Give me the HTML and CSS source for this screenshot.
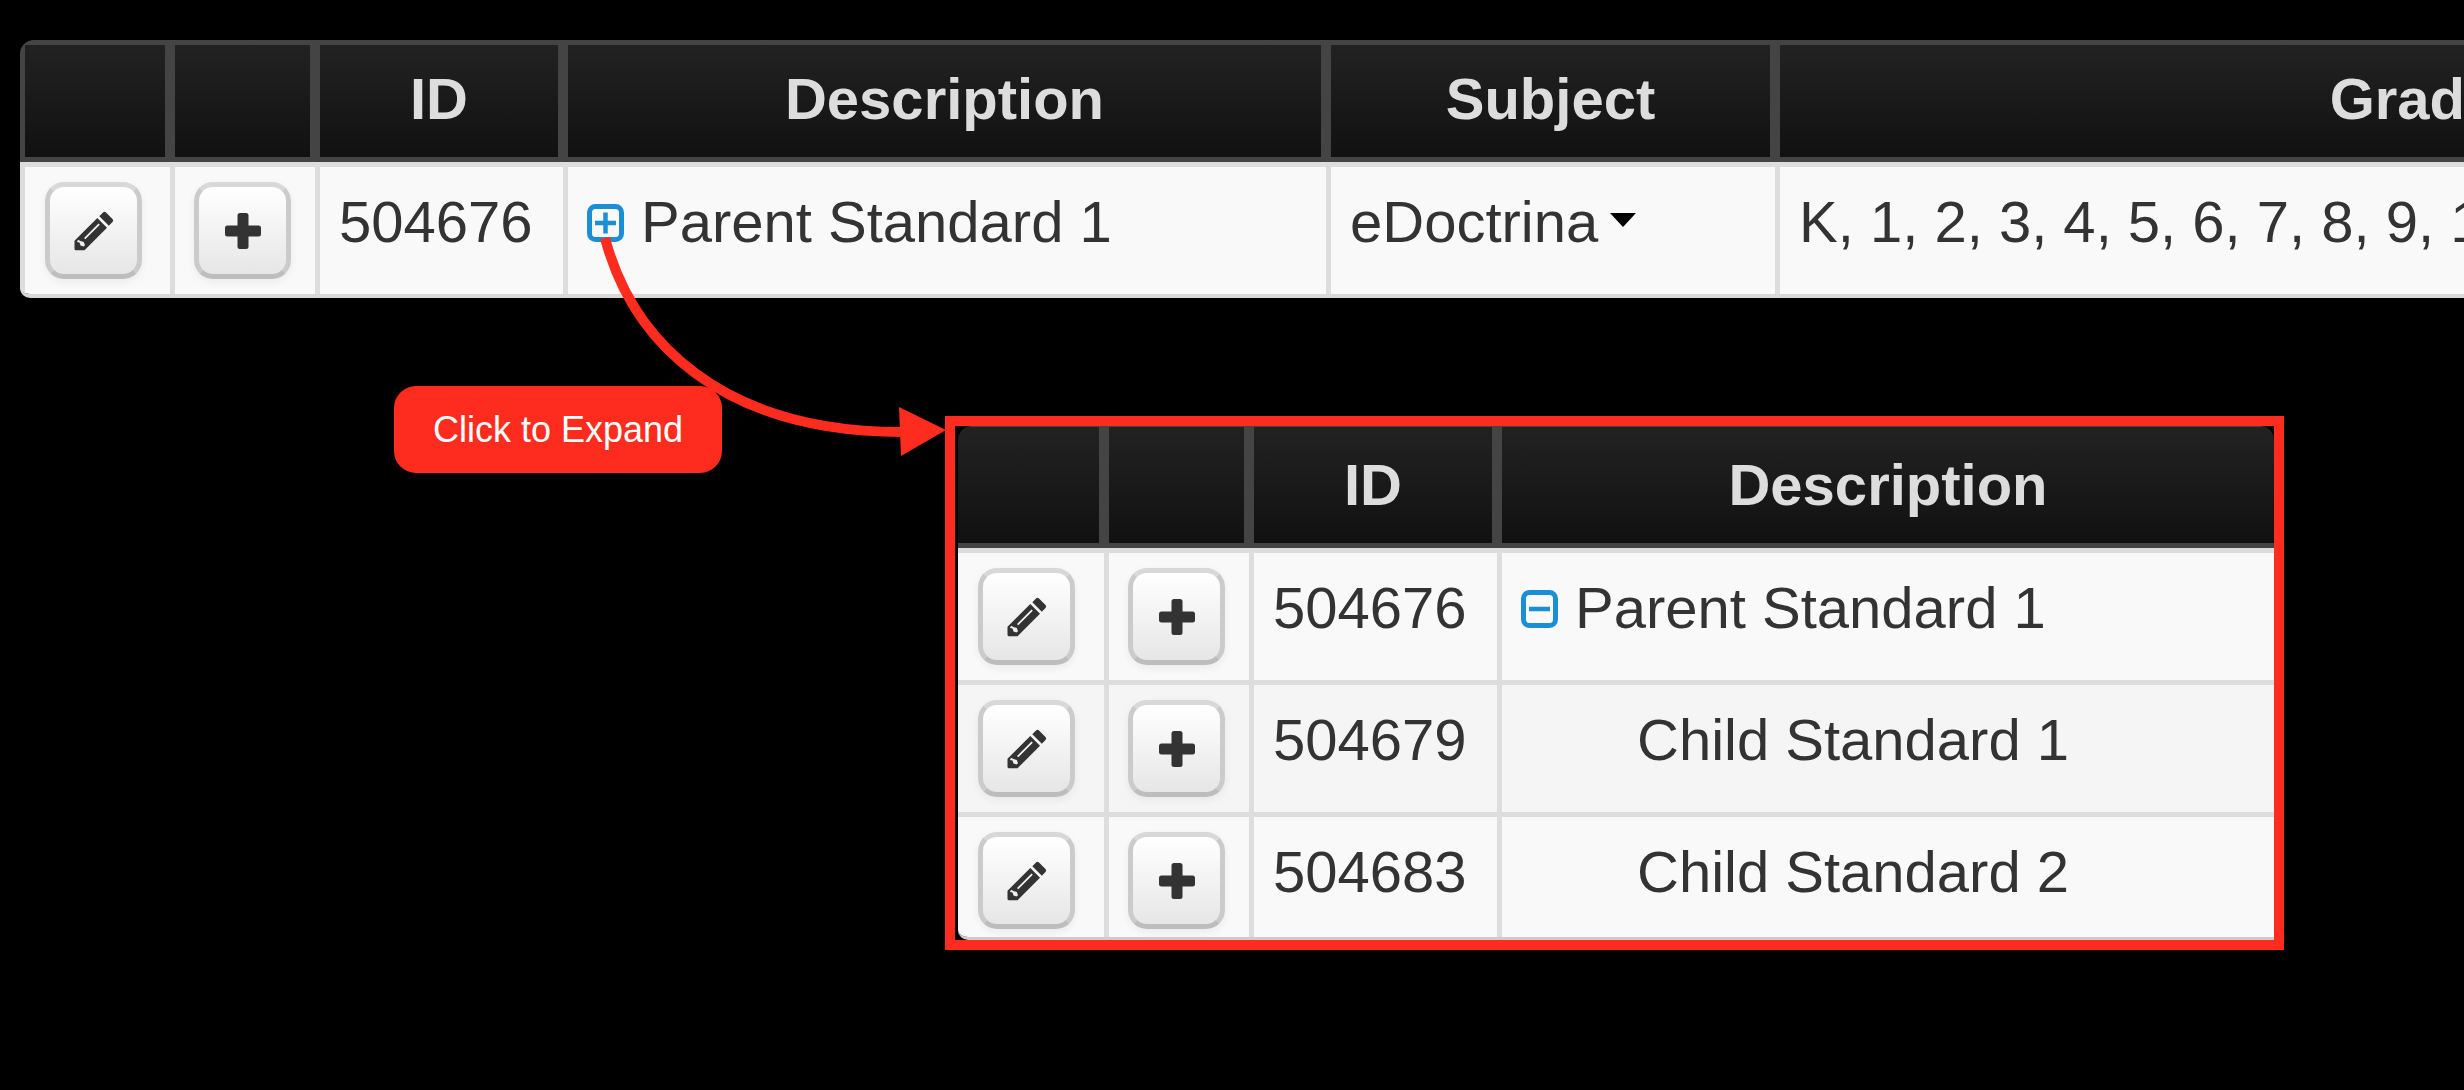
FILE: index.html
```html
<!DOCTYPE html>
<html lang="en">
<head>
    <meta charset="UTF-8">
    <title>Expand Standards</title>
    <link rel="stylesheet" href="styles.css">
</head>
<body>
    <div class="pagina">
        <div class="tabela-wrap principal">
            <table class="tabela">
                <thead>
                    <tr>
                        <th></th>
                        <th></th>
                        <th>ID</th>
                        <th>Description</th>
                        <th>Subject</th>
                        <th>Grade</th>
                    </tr>
                </thead>
                <tbody>
                    <tr>
                        <td><button class="botao"><svg class="ico-lapis" viewBox="0 0 40 40"><use href="#lapis"/></svg></button></td>
                        <td><button class="botao"><svg class="ico-mais" viewBox="0 0 36 36"><use href="#mais"/></svg></button></td>
                        <td>504676</td>
                        <td><svg class="toggle" viewBox="0 0 37 38"><rect x="2.5" y="2.5" width="32" height="33" rx="6"/><path d="M8 19H29M18.5 8.500V29.500"/></svg>Parent Standard 1</td>
                        <td>eDoctrina<span class="caret"></span></td>
                        <td>K, 1, 2, 3, 4, 5, 6, 7, 8, 9, 10, 11, 12</td>
                    </tr>
                </tbody>
            </table>
        </div>

        <div class="moldura">
            <div class="tabela-wrap">
                <table class="tabela expandida">
                    <thead>
                        <tr>
                            <th></th>
                            <th></th>
                            <th>ID</th>
                            <th>Description</th>
                        </tr>
                    </thead>
                    <tbody>
                        <tr>
                            <td><button class="botao"><svg class="ico-lapis" viewBox="0 0 40 40"><use href="#lapis"/></svg></button></td>
                            <td><button class="botao"><svg class="ico-mais" viewBox="0 0 36 36"><use href="#mais"/></svg></button></td>
                            <td>504676</td>
                            <td><svg class="toggle" viewBox="0 0 37 38"><rect x="2.5" y="2.500" width="32" height="33" rx="6"/><path d="M8 19H29"/></svg>Parent Standard 1</td>
                        </tr>
                        <tr class="par">
                            <td><button class="botao"><svg class="ico-lapis" viewBox="0 0 40 40"><use href="#lapis"/></svg></button></td>
                            <td><button class="botao"><svg class="ico-mais" viewBox="0 0 36 36"><use href="#mais"/></svg></button></td>
                            <td>504679</td>
                            <td class="filho">Child Standard 1</td>
                        </tr>
                        <tr>
                            <td><button class="botao"><svg class="ico-lapis" viewBox="0 0 40 40"><use href="#lapis"/></svg></button></td>
                            <td><button class="botao"><svg class="ico-mais" viewBox="0 0 36 36"><use href="#mais"/></svg></button></td>
                            <td>504683</td>
                            <td class="filho">Child Standard 2</td>
                        </tr>
                    </tbody>
                </table>
            </div>
        </div>

        <!-- anotacao por cima da tabela -->
        <svg class="seta" viewBox="0 0 2464 1090">
            <path class="seta-linha" d="M605 238C632 340 720 432 902 432"/>
            <polygon class="seta-ponta" points="899,407 946,430 901,456"/>
        </svg>
        <div class="balao">Click to Expand</div>
    </div>

    <svg class="defs" width="0" height="0">
        <defs>
            <g id="lapis">
                <path d="M29 1.500Q30.500 0 32 1.500L38.500 8Q40 9.500 38.500 11L34.800 14.700L25.300 5.200Z"/>
                <path fill-rule="evenodd" d="M23.300 7L33 16.800L10.500 39.300H2Q.5 39.300 .5 37.800V29.800ZM24.500 12.500L10 27L11.300 28.300L25.800 13.800ZM4 28.800L3 31L5.500 31.600L6.500 34.500L9.500 35.500L11 34.300L9.800 31L6.500 30Z"/>
            </g>
            <g id="mais">
                <rect x="0" y="12.500" width="36" height="11" rx="2.500"/>
                <rect x="12.500" y="0" width="11" height="36" rx="2.500"/>
            </g>
        </defs>
    </svg>
</body>
</html>
```

FILE: styles.css
```css
body {
    margin: 0;
    background: #000;
    font-family: "Liberation Sans", Arial, sans-serif;
}

.pagina {
    position: relative;
    box-sizing: border-box;
    width: 2464px;
    height: 1090px;
    padding: 40px 0 0 20px;
    overflow: hidden;
}

.defs {
    position: absolute;
}

/* tabelas */
.tabela-wrap {
    border-radius: 14px 14px 0 10px;
    overflow: hidden;
}

.principal {
    width: 3032px;
    border-bottom: 4px solid #d8d8d8;
}

.tabela {
    width: 100%;
    table-layout: fixed;
    border-collapse: separate;
    border-spacing: 0;
    font-size: 58px;
    line-height: 80px;
    white-space: nowrap;
}

.tabela th {
    box-sizing: border-box;
    height: 122px;
    padding: 14px 19px 18px;
    border: 5px solid #444;
    background: linear-gradient(to bottom, #222, #111);
    color: #ddd;
    font-weight: bold;
    text-align: center;
}

.tabela td {
    box-sizing: border-box;
    height: 131px;
    padding: 15px 19px;
    border-top: 5px solid #ddd;
    border-left: 5px solid #ddd;
    background: #f9f9f9;
    color: #333;
    vertical-align: top;
    overflow: hidden;
}

.tabela td:first-child {
    padding-left: 20px;
}

.principal th:nth-child(1) { width: 150px; }
.principal th:nth-child(2) { width: 145px; }
.principal th:nth-child(3) { width: 248px; }
.principal th:nth-child(4) { width: 763px; }
.principal th:nth-child(5) { width: 449px; }

/* tabela dentro da moldura vermelha */
.moldura {
    box-sizing: border-box;
    width: 1339px;
    height: 534px;
    margin: 118px 0 0 925px;
    padding-left: 3px;
    border: 10px solid #fe2c1e;
}

.moldura .tabela-wrap {
    height: 514px;
    border-bottom: 3px solid #ccc;
    box-sizing: border-box;
}

.expandida th {
    height: 118px;
    border-top-width: 1px;
    padding-top: 18px;
}

.expandida th:first-child {
    border-left-width: 0;
}

.expandida th:last-child {
    border-right-width: 0;
}

.expandida td:first-child {
    border-left: 0;
}

.expandida th:nth-child(1) { width: 146px; }
.expandida th:nth-child(2) { width: 145px; }
.expandida th:nth-child(3) { width: 248px; }

.expandida .par td {
    background: #f5f5f5;
}

.expandida .filho {
    padding-left: 135px;
}

/* botoes */
.botao {
    display: flex;
    align-items: center;
    justify-content: center;
    box-sizing: border-box;
    width: 97px;
    height: 97px;
    padding: 0;
    border: 5px solid #cbcbcb;
    border-top-color: #d8d8d8;
    border-bottom-color: #bdbdbd;
    border-radius: 19px;
    background: linear-gradient(to bottom, #fff, #e6e6e6);
    box-shadow: 0 3px 8px rgba(0, 0, 0, 0.06);
}

.ico-lapis {
    width: 40px;
    height: 40px;
    fill: #333;
}

.ico-mais {
    width: 36px;
    height: 36px;
    fill: #333;
}

.toggle {
    width: 37px;
    height: 38px;
    margin-right: 17px;
    fill: none;
    stroke: #1a8fd6;
    stroke-width: 5;
}

.toggle path {
    stroke-width: 4.5;
}

.caret {
    display: inline-block;
    margin-left: 12px;
    border-top: 14px solid #000;
    border-left: 13.5px solid transparent;
    border-right: 13.5px solid transparent;
    vertical-align: 15px;
}

/* anotacao */
.seta {
    position: absolute;
    top: 0;
    left: 0;
    width: 2464px;
    height: 1090px;
}

.seta-linha {
    fill: none;
    stroke: #fe2c1e;
    stroke-width: 10;
}

.seta-ponta {
    fill: #fe2c1e;
}

.balao {
    position: absolute;
    top: 386px;
    left: 394px;
    display: flex;
    align-items: center;
    justify-content: center;
    width: 328px;
    height: 87px;
    border-radius: 22px;
    background: #fe2c1e;
    color: #fff;
    font-size: 36px;
}
```
